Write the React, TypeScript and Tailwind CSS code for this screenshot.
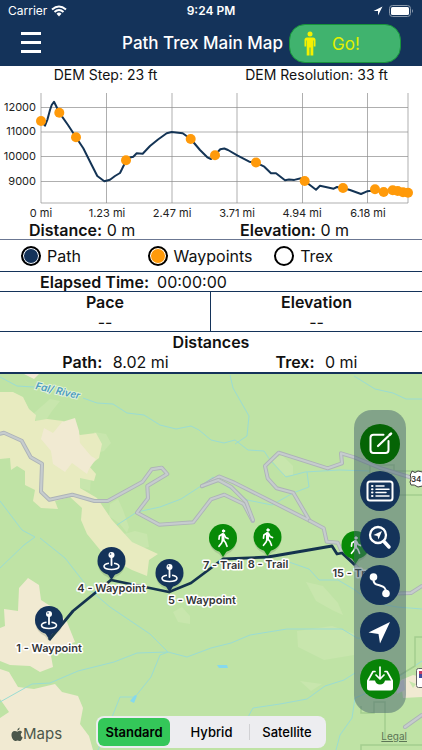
import React from "react";

const NAVY = "#14335a";
const GREEN = "#078a07";

const gridX = [41, 106.5, 172, 237, 302.5, 367.5, 408];
const gridY = [107.5, 132, 156.5, 181.5, 203];
const elevationLabels = [
  { y: 111, text: "12000" },
  { y: 135, text: "11000" },
  { y: 160, text: "10000" },
  { y: 185, text: "9000" },
];
const distanceLabels = [
  { x: 41, text: "0 mi" },
  { x: 107, text: "1.23 mi" },
  { x: 172, text: "2.47 mi" },
  { x: 237, text: "3.71 mi" },
  { x: 302, text: "4.94 mi" },
  { x: 368, text: "6.18 mi" },
];
const chartStops = [
  [41, 121], [59.3, 112.7], [76, 137.3], [126, 160.3], [190.7, 139], [215, 155.2], [256, 162.5],
  [304.7, 181], [343, 188], [375, 189.3], [383.7, 192], [392.7, 190.3], [397.7, 191], [403, 192.3], [408, 192.7],
];

function ElevationChart() {
  return (
    <svg viewBox="0 84 422 137" className="block w-full" role="img" aria-label="Elevation profile">
      <g stroke="#8c8c8c" strokeWidth="0.7">
        {gridX.map((x) => <path key={x} d={`M${x} 93V203`} />)}
        {gridY.map((y) => <path key={y} d={`M41 ${y}H408`} />)}
      </g>
      <path
        d="M41 121L45 125.7 47.3 120 50 110 51.7 105 54 101.7 56 105.7 59.3 112.7 68 125 76 137.3 83.3 148.3 91.7 165 97.3 176 104.3 181.3 110 179.7 115 176 120 173 122 169 126 160.7 130 157.5 133.3 156.7 136.7 153.3 142.7 153.7 150 146 158 139.5 166.7 133.3 171.7 132 182.7 133.3 190.7 139 200 150 207.3 157.3 211 159 215 155 220.3 149.3 224.3 148.5 228 150 237.7 155.7 249.3 161.7 256 162.7 264.3 166.7 271 173.3 276 173.3 285 180.3 289 179.5 294.3 179.9 301 178.3 304.7 181 316 189.7 320 185.7 333.7 188.7 337 187 343 188 350 190 361 194 367 191.3 375 190.5 383.7 192 392.7 190.3 408 192.7"
        fill="none" stroke="#143455" strokeWidth="2" strokeLinejoin="round"
      />
      {chartStops.map(([x, y]) => <circle key={x} cx={x} cy={y} r="5" fill="#ff9a0a" />)}
      <g fontSize="11" fill="#222" style={{ fontFamily: "Inter, sans-serif" }}>
        {elevationLabels.map((l) => <text key={l.text} x="36" y={l.y} textAnchor="end">{l.text}</text>)}
        {distanceLabels.map((l) => <text key={l.text} x={l.x} y="217" textAnchor="middle">{l.text}</text>)}
      </g>
    </svg>
  );
}

function Hiker() {
  return (
    <g stroke="#fff" strokeWidth="1.7" fill="none" strokeLinecap="round" strokeLinejoin="round">
      <circle cx="0.5" cy="-7" r="1.2" fill="#fff" strokeWidth="1" />
      <path d="M0 -3.5L0 2" strokeWidth="3" />
      <path d="M-0.5 -4L-3.6 -2 -4 1.2M1 -3.5L2.6 -0.6 5 0.6M-0.3 2L-1.4 5 -4 8.3M0.5 2L2.5 4.5 4 8.3" />
    </g>
  );
}

function Pushpin() {
  return (
    <g fill="none" stroke="#fff">
      <path d="M0 -5V4" strokeWidth="1.8" strokeLinecap="round" />
      <circle cx="0" cy="-6" r="3" fill="#fff" stroke="none" />
      <circle cx="-1" cy="-7" r="0.8" fill={NAVY} stroke="none" />
      <path d="M-2.5 2.3C-10 3.4 -9 8.5 0 8.5S10 3.4 2.5 2.3" strokeWidth="1.6" />
    </g>
  );
}

function Marker({ x, y, kind }: { x: number; y: number; kind: "waypoint" | "trail" }) {
  const waypoint = kind === "waypoint";
  return (
    <g transform={`translate(${x} ${y})`}>
      <path d="M-14 2A14 14 0 1 1 14 2Q12 12 4 15L0 20 -4 15Q-12 12 -14 2Z" fill="#3b5b3d" opacity="0.18" transform="translate(0 1)" />
      <path d="M-4.5 12L0 19 4.5 12Z" fill={waypoint ? NAVY : GREEN} />
      <circle r="14" fill={waypoint ? NAVY : GREEN} />
      {waypoint ? <Pushpin /> : <Hiker />}
    </g>
  );
}

const roads = [
  "M0 433.7L4 432.7 21.7 440.7 30.7 457.3 42 463.7 41 491.7 49.3 499.7 72.3 494.7 94.3 501 107.7 501 142.7 481.7 151.7 469.3 161.7 467.7 167.3 474 147.3 486 148 498.3 137 512.7 159.3 524.7 193.3 522.3 211 499.3 224.3 494.7 243.7 504 252.7 521",
  "M202 486.3L219.3 476.5 234.3 482.7 309.7 520.7 293.3 492.7 276.7 488.3 267.7 478.3 265 466 278.7 452.7 327.7 468.3 342 463.3 341 453.3 354.3 457.3 380 468 416 479",
  "M202 486L218.3 480 231 486.7 246 501.7 253 520",
  "M309.7 520.7L323.7 528.3 326.7 541.7 337.7 542.7 341 550 356 566 378 590 397 593.5 411 593 422 586",
  "M405 727L422 715",
];

const mapLabels = [
  { x: 49, y: 652, text: "1 - Waypoint" },
  { x: 111.5, y: 592, text: "4 - Waypoint" },
  { x: 202, y: 604, text: "5 - Waypoint" },
  { x: 223, y: 569, text: "7 - Trail" },
  { x: 268, y: 568, text: "8 - Trail" },
  { x: 355, y: 577, text: "15 - Trail" },
];

function TerrainMap() {
  return (
    <svg viewBox="0 374 422 376" preserveAspectRatio="xMidYMid slice" className="absolute inset-0 h-full w-full" role="img" aria-label="Trail map">
      <rect y="374" width="422" height="376" fill="#bfe3a5" />
      <g fill="#c8e6ad">
        <path d="M34 413L50 399 60 401 52 411 46 420 36 421Z" />
        <path d="M94 432L106 434 111 443 104 451 97 453Z" />
        <path d="M80 477L91 476 90 491 80 488Z" />
        <path d="M110 504L118 499 123 510 129 527 127 533 120 524 109 516Z" />
        <path d="M124 534L135 531 147 534 149 547 134 550 123 541Z" />
        <path d="M272 460L282 455 293 466 293 475 284 476Z" />
        <path d="M297 631L332 626 355 634 354 655 324 660 298 647Z" />
        <path d="M306 582L323 586 338 603 343 615 332 610 316 601Z" />
        <path d="M300 681L322 684 311 691Z" />
        <path d="M173 612L182 607 190 616 190 624 178 622Z" />
      </g>
      <path d="M0 392L13 392 23 397 29 409 36 415 35 421 47 419 63 421 80 435 96 433 102 444 99 458 89 466 96 474 94 481 80 478 80 488 97 498 112 520 132 542 158 554 149 560 147 576 132 570 105 556 87 534 81 520 82 508 70 497 55 501 58 509 41 508 33 501 35 490 25 485 25 471 17 466 11 470 10 458 0 459Z" fill="#e8ebc0" />
      <g fill="#f1ead2">
        <path d="M44 428L53 433 62 422 75 418 79 431 80 443 91 456 96 459 89 469 87 474 72 463 65 472 53 464 51 451 41 439Z" />
        <path d="M19 588L28 578 39 585 41 600 55 609 67 622 75 642 67 645 50 650 53 667 40 672 30 666 10 665 0 661 0 628 5 626 4 609 18 611Z" />
        <path d="M0 669L9 672 18 687 34 689 55 684 62 692 78 696 83 708 80 724 89 736 93 750 0 750 0 718 9 712 0 699Z" />
        <path d="M24 374H39L34 379Z" />
        <path d="M401 680L413 675 422 677V697L403 698Z" />
      </g>
      <path d="M396 684L404 679 405 690 397 694Z" fill="#dfd3e1" />
      <path d="M409 681L416 684 413 688Z" fill="#c8e6ad" />
      <g fill="none" stroke="#9bdcd2" strokeWidth="1">
        <path d="M0 377L17 386 34 387M83 398L97 403 113 404 127 413 144 415 160 425 176 429 191 426 199 430 211 440 224 443 235 440 248 450 264 451 270 460 286 477 305 472 339 470 370 471" />
        <path d="M230 375L233 388 249 416 247 436 235 444M354 376L375 389 393 393 406 399H422" />
        <path d="M117 525L137 512 160 507 181 499 201 486 213 477 247 500 272 505 293 493 309 487 307 472" />
        <path d="M0 568L24 545 35 537 22 530 0 501M40 538L65 558 90 590 110 607 150 634 168 652 187 657 211 648 231 643 250 635 287 629 342 629 357 638 382 640" />
        <path d="M168 652L137 653 114 662 78 671 50 683 32 684 0 702M168 652L160 655 151 677 135 697H120L112 717 98 750" />
        <path d="M248 717L253 708 280 704 307 699 325 686 344 680 355 673M286 561L309 569 319 580 338 580 355 590 370 602 397 607 422 609M336 750L340 735 352 718 355 698 388 684 422 661" />
      </g>
      <path d="M217 665L227 665 228 668 219 668ZM130 701L135 695 137 696 134 703Z" fill="#85d9ed" />
      <g fill="none" stroke="#a4ce8e" strokeWidth="1.5">
        <path d="M370 470V465H394V471H422M370 470V495H422M415 657V637H422M415 657V666L400 675M361 706V713H374V702H385V740M361 750V745H422" />
      </g>
      {roads.map((d) => (
        <g key={d} fill="none" strokeLinecap="round" strokeLinejoin="round">
          <path d={d} stroke="#adb3b7" strokeWidth="4" />
          <path d={d} stroke="#c6ccce" strokeWidth="2.2" />
        </g>
      ))}
      <path d="M49 640L73 611 111 580 169 592 191 583 223 559 268 557 332 546 337 554 342 553 355 565" fill="none" stroke="#14334e" strokeWidth="2.8" strokeLinejoin="round" />
      <Marker x={49} y={620} kind="waypoint" />
      <Marker x={111.5} y={561} kind="waypoint" />
      <Marker x={169.5} y={573} kind="waypoint" />
      <Marker x={223} y={538} kind="trail" />
      <Marker x={267.5} y={537} kind="trail" />
      <Marker x={355.5} y={545} kind="trail" />
      <g fontSize="11" fontWeight="600" fill="#333537" stroke="#fff" strokeWidth="3" strokeLinejoin="round" paintOrder="stroke" textAnchor="middle" style={{ fontFamily: "Inter, sans-serif" }}>
        {mapLabels.map((l) => <text key={l.text} x={l.x} y={l.y}>{l.text}</text>)}
      </g>
      <text transform="translate(35 389) rotate(13)" fontSize="10" fontWeight="600" fontStyle="italic" fill="#4c9cc0" stroke="#e1f2da" strokeWidth="2" paintOrder="stroke" style={{ fontFamily: "Inter, sans-serif" }}>
        Fal/ River
      </text>
      <path d="M412 471Q415 474 418 471 422 473 427 471V487Q422 485 418 487 414 484 411 485 409 482 411 479 409 475 412 471Z" fill="#fff" stroke="#444" />
      <text x="411" y="482" fontSize="8" fontWeight="600" fill="#333" style={{ fontFamily: "Inter, sans-serif" }}>34</text>
      <rect x="416.500" y="668.500" width="12" height="19" rx="2" fill="#fff" stroke="#666" />
      <path d="M419 671H422V674H419Z" fill="#c43d63" />
      <path d="M419 674H422V678H419Z" fill="#414d9e" />
    </svg>
  );
}

const tools = [
  {
    name: "Edit", color: "bg-[#056405]",
    art: <><path d="M23.500 10.800H13.500A3 3 0 0 0 10.500 13.800V26A3 3 0 0 0 13.500 29H25.500A3 3 0 0 0 28.500 26V17" strokeWidth="2" /><path d="M18 22L28 12.500" strokeWidth="2.200" /><path d="M29.500 11L31 9.600" strokeWidth="2.600" /></>,
  },
  {
    name: "List", color: "bg-[#14335a]",
    art: <><rect x="7.500" y="10.500" width="25" height="19" rx="2.500" strokeWidth="2" /><path d="M16 15H24M16 18.300H29M16 21.600H26M16 25H29" strokeWidth="1.500" /><path d="M12 15H12.500M12 18.300H12.500M12 21.600H12.500M12 25H12.500" strokeWidth="2" /></>,
  },
  {
    name: "Find location", color: "bg-[#14335a]",
    art: <><circle cx="18" cy="17" r="8" strokeWidth="2.300" /><path d="M24 23.500L29 29" strokeWidth="3.500" /><path d="M22 13L13.500 17 17.500 18 18.500 21.500Z" fill="#fff" stroke="none" /></>,
  },
  {
    name: "Route", color: "bg-[#14335a]",
    art: <><circle cx="13.500" cy="12" r="3.800" fill="#fff" stroke="none" /><circle cx="26" cy="28.500" r="3.800" fill="#fff" stroke="none" /><path d="M13.500 13C13 20 17 19.500 20 20.500S26 22 26 28" strokeWidth="2" /></>,
  },
  {
    name: "Locate", color: "bg-[#14335a]",
    art: <path d="M30 10L8.500 20.500 18.500 22 20 31.500Z" fill="#fff" stroke="none" />,
  },
  {
    name: "Download", color: "bg-[#078307]",
    art: <><path d="M15 12.500H13L8 21.500M25 12.500H27L32 21.500M20 8V19.500M16 16L20 20 24 16" strokeWidth="1.700" /><path d="M7 21.500H15Q16 25.500 20 25.500T25 21.500H33V29Q33 31.500 30.500 31.500H9.500Q7 31.500 7 29Z" fill="#fff" stroke="none" /></>,
  },
];

function LegendItem({ label, fill, checked }: { label: string; fill: string; checked: boolean }) {
  return (
    <label className="flex w-[30%] items-center gap-1.5 pl-[21px]">
      <input type="checkbox" defaultChecked={checked} className={`size-5 shrink-0 appearance-none rounded-full border-2 border-black shadow-[inset_0_0_0_1px_white] ${fill}`} />
      {label}
    </label>
  );
}

export default function App() {
  return (
    <div className="flex min-h-screen flex-col bg-white font-['Inter',sans-serif] text-base leading-5 text-[#111]">
      <header className="bg-[#14335a] text-white">
        <div className="grid h-[22px] grid-cols-3 items-center px-2 text-[12px]">
          <div className="flex items-center gap-1">
            <span>Carrier</span>
            <svg viewBox="0 0 16 12" className="h-3 w-4" fill="none" stroke="currentColor" strokeWidth="2">
              <path d="M1 4.500Q8 -1.500 15 4.500M3.500 7Q8 3 12.500 7" />
              <path d="M5.500 8.700Q8 6.500 10.500 8.700L8 11.500Z" fill="currentColor" stroke="none" />
            </svg>
          </div>
          <span className="text-center font-semibold">9:24 PM</span>
          <div className="flex items-center justify-end gap-1.5">
            <svg viewBox="0 0 10 10" className="size-2.5" fill="currentColor"><path d="M9.500 0.500L0.500 5H5V9.500Z" /></svg>
            <svg viewBox="0 0 25 12" className="h-3 w-[25px]">
              <rect x="0.500" y="0.500" width="21" height="11" rx="3" fill="none" stroke="#8998aa" />
              <rect x="2" y="2" width="18" height="8" rx="1.500" fill="#fff" />
              <path d="M23 4V8Q25 6 23 4Z" fill="#8998aa" />
            </svg>
          </div>
        </div>
        <div className="flex h-11 items-start px-[21px]">
          <button aria-label="Menu" className="mt-2.5 flex w-5 flex-col gap-1.5">
            <span className="h-[3px] w-full bg-white" />
            <span className="h-[3px] w-full bg-white" />
            <span className="h-[3px] w-full bg-white" />
          </button>
          <h1 className="mt-[11px] ml-auto text-[17px] font-medium whitespace-nowrap">Path Trex Main Map</h1>
          <button className="mt-0.5 ml-1.5 flex h-[39px] w-28 items-center gap-4 rounded-2xl border border-[#17943b] bg-[#40b36e] pl-3.5 text-[17px] text-[#e2f000]">
            <svg viewBox="0 0 12 25" className="h-[25px] w-3" fill="#f5f000">
              <circle cx="6" cy="3" r="2.500" />
              <path d="M3 6.500H9Q11.500 6.500 11.500 9V15.500H9.800V9.500H9.300V24.500H6.500V16.500H5.500V24.500H2.700V9.500H2.200V15.500H0.500V9Q0.500 6.500 3 6.500Z" />
            </svg>
            Go!
          </button>
        </div>
      </header>

      <div className="grid grid-cols-2 text-center text-[14px] leading-[18px]">
        <span>DEM Step: 23 ft</span>
        <span>DEM Resolution: 33 ft</span>
      </div>
      <ElevationChart />
      <div className="flex h-[19px] border-b border-[#6b7792] leading-[18px]">
        <div className="w-1/2 pl-[29px]"><b className="font-semibold">Distance:</b> 0 m</div>
        <div className="w-1/2 pl-[29px]"><b className="font-semibold">Elevation:</b> 0 m</div>
      </div>
      <fieldset className="border-b border-[#14335a]">
        <div className="flex h-[31px] items-center">
          <LegendItem label="Path" fill="bg-[#14335a]" checked />
          <LegendItem label="Waypoints" fill="bg-[#ff9a0a]" checked />
          <LegendItem label="Trex" fill="bg-white" checked={false} />
        </div>
      </fieldset>
      <div className="flex h-5 gap-2 border-b border-[#14335a] pl-10">
        <b className="font-semibold">Elapsed Time:</b><span>00:00:00</span>
      </div>
      <div className="grid h-10 grid-cols-2 border-b border-[#14335a] text-center">
        <div className="border-r border-[#14335a]"><b className="block font-semibold">Pace</b>--</div>
        <div><b className="block font-semibold">Elevation</b>--</div>
      </div>
      <div className="border-b-2 border-[#14335a] text-center">
        <h2 className="font-semibold">Distances</h2>
        <div className="grid grid-cols-2">
          <p className="pl-5"><b className="mr-1.5 font-semibold">Path:</b> 8.02 mi</p>
          <p><b className="mr-1.5 font-semibold">Trex:</b> 0 mi</p>
        </div>
      </div>

      <main className="relative min-h-[376px] flex-1 overflow-hidden">
        <TerrainMap />
        <nav className="absolute top-9 right-4 flex w-[52px] flex-col items-center gap-[7px] rounded-[18px] bg-[#45646e]/50 py-3.5">
          {tools.map((tool) => (
            <button key={tool.name} aria-label={tool.name} className={`size-10 rounded-full ${tool.color}`}>
              <svg viewBox="0 0 40 40" className="size-10" fill="none" stroke="#fff" strokeLinecap="round" strokeLinejoin="round">{tool.art}</svg>
            </button>
          ))}
        </nav>
        <div className="absolute bottom-1.5 left-[11px] flex items-center text-[15px] text-[#4b574b]">
          <svg viewBox="0 0 12 15" className="h-[15px] w-3" fill="currentColor">
            <path d="M8.700 0.500Q8.800 3 6.200 3.700 6.200 1.500 8.700 0.500ZM6.200 4.700Q8 3.500 9.200 3.800 10.500 4 11.200 5 9.500 6.200 9.800 8 10 9.700 11.700 10.400 10.300 14 8.500 14 7.500 13.500 6.200 13.500 5 14 4 14 2.500 14 1.200 11.200 -0.300 7.500 1.200 5.300 2.800 3.200 5.200 4.300Z" />
          </svg>
          Maps
        </div>
        <div className="absolute bottom-0.5 left-1/2 flex h-8 w-[230px] -translate-x-1/2 items-center rounded-lg bg-[#ededf0] p-0.5 text-[13px] font-medium text-black">
          <button className="h-7 w-[72px] rounded-md bg-[#34c759] font-semibold">Standard</button>
          <button className="h-7 flex-1 pl-1">Hybrid</button>
          <span className="h-4 w-px bg-[#d1d1d4]" />
          <button className="h-7 w-[74px]">Satellite</button>
        </div>
        <a href="#legal" className="absolute right-[15px] bottom-1.5 text-[10px] leading-4 text-[#5c7656] underline">Legal</a>
      </main>
    </div>
  );
}
